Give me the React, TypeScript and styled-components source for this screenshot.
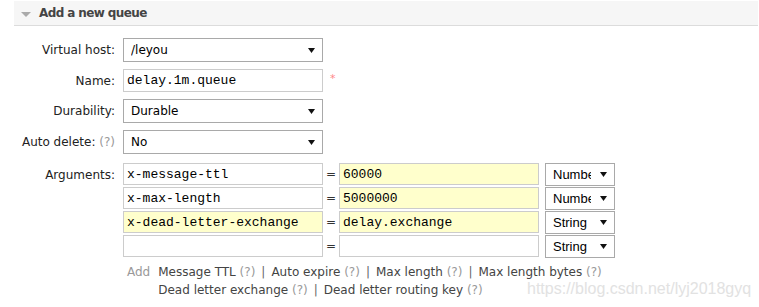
import styled, { createGlobalStyle } from "styled-components";

const GlobalStyle = createGlobalStyle`
  body {
    margin: 0;
    background: #fff;
    color: #333;
    font-family: "DejaVu Sans", Verdana, sans-serif;
    font-size: 12px;
  }
`;

type Arg = { key: string; value: string; type: string; hlKey?: boolean; hlValue?: boolean };

const args: Arg[] = [
    { key: "x-message-ttl", value: "60000", type: "Number", hlValue: true },
    { key: "x-max-length", value: "5000000", type: "Number", hlValue: true },
    { key: "x-dead-letter-exchange", value: "delay.exchange", type: "String", hlKey: true, hlValue: true },
    { key: "", value: "", type: "String" },
];

function Select({ value, width, sans }: { value: string; width: number; sans?: boolean }) {
    return (
        <SelectBox $width={width} $sans={sans}>
            <SelectValue $clip={sans}>{value}</SelectValue>
            <Arrow width="7" height="5" viewBox="0 0 7 5">
                <path d="M0 0H7L3.5 5Z" fill="#111" />
            </Arrow>
        </SelectBox>
    );
}

function Hint({ name }: { name: string }) {
    return (
        <HintLink>
            {name} <Help>(?)</Help>
        </HintLink>
    );
}

export default function App() {
    return (
        <Page>
            <GlobalStyle />
            <Panel>
                <PanelHeader>
                    <Toggle width="10" height="5" viewBox="0 0 10 5">
                        <path d="M0 0H10L5 5Z" fill="#aaa" />
                    </Toggle>
                    <Title>Add a new queue</Title>
                </PanelHeader>

                <Form>
                    <Label>Virtual host:</Label>
                    <Select value="/leyou" width={200} />

                    <Label>Name:</Label>
                    <Field>
                        <TextInput readOnly value="delay.1m.queue" $width={200} $height={23} />
                        <Required>*</Required>
                    </Field>

                    <Label>Durability:</Label>
                    <Select value="Durable" width={200} />

                    <Label>
                        Auto delete: <Help>(?)</Help>
                    </Label>
                    <Select value="No" width={200} />

                    <Label $top>Arguments:</Label>
                    <ArgsBlock>
                        <ArgTable>
                            {args.map((a, i) => (
                                <ArgRow key={i}>
                                    <TextInput readOnly value={a.key} $width={200} $height={22} $hl={a.hlKey} />
                                    <Equals>=</Equals>
                                    <TextInput readOnly value={a.value} $width={200} $height={22} $hl={a.hlValue} />
                                    <TypeCell>
                                        <Select value={a.type} width={70} sans />
                                    </TypeCell>
                                </ArgRow>
                            ))}
                        </ArgTable>

                        <AddLine>
                            <AddLabel>Add</AddLabel>
                            <Hints>
                                <HintRow>
                                    <Hint name="Message TTL" />
                                    <Sep>|</Sep>
                                    <Hint name="Auto expire" />
                                    <Sep>|</Sep>
                                    <Hint name="Max length" />
                                    <Sep>|</Sep>
                                    <Hint name="Max length bytes" />
                                </HintRow>
                                <HintRow>
                                    <Hint name="Dead letter exchange" />
                                    <Sep>|</Sep>
                                    <Hint name="Dead letter routing key" />
                                </HintRow>
                            </Hints>
                        </AddLine>
                    </ArgsBlock>
                </Form>
            </Panel>

            <Watermark>https://blog.csdn.net/lyj2018gyq</Watermark>
        </Page>
    );
}

const Page = styled.div`
    position: relative;
    width: 759px;
    height: 307px;
    overflow: hidden;
`;

const Panel = styled.div`
    margin: 1px 1px 0 14px;
`;

const PanelHeader = styled.div`
    height: 24px;
    display: flex;
    align-items: center;

    background-color: #f6f6f6;
    border-bottom: 1px solid #dcdcdc;
`;

const Toggle = styled.svg`
    margin: 2px 8px 0 7px;
`;

const Title = styled.div`
    color: #444;
    font-size: 12px;
    font-weight: 700;
    letter-spacing: -0.6px;
`;

const Form = styled.div`
    display: grid;
    grid-template-columns: 101px auto;
    column-gap: 8px;
    row-gap: 7px;
    align-items: center;

    margin-top: 12px;
`;

const Label = styled.div<{ $top?: boolean }>`
    text-align: right;
    white-space: nowrap;
    color: #222;
    align-self: ${(p) => (p.$top ? "start" : "center")};
    line-height: ${(p) => (p.$top ? "28px" : "normal")};
`;

const Help = styled.span`
    color: #999;
`;

const Field = styled.div`
    display: flex;
    align-items: flex-start;
`;

const Required = styled.span`
    color: #f88;
    margin: 4px 0 0 7px;
    font-size: 11px;
    line-height: 12px;
`;

const SelectBox = styled.div<{ $width: number; $sans?: boolean }>`
    box-sizing: border-box;
    width: ${(p) => p.$width}px;
    height: ${(p) => (p.$sans ? 23 : 24)}px;

    display: flex;
    align-items: center;
    padding: 0 7px;

    border: 1px solid #a9a9a9;
    background: #fff;
    color: #000;
    font-family: ${(p) => (p.$sans ? '"Liberation Sans", Arial, sans-serif' : '"DejaVu Sans", Verdana, sans-serif')};
    font-size: ${(p) => (p.$sans ? 13 : 12)}px;
`;

const SelectValue = styled.span<{ $clip?: boolean }>`
    flex: 1;
    overflow: hidden;
    white-space: nowrap;
    margin-right: ${(p) => (p.$clip ? 9 : 4)}px;
`;

const Arrow = styled.svg`
    flex: none;
`;

const TextInput = styled.input<{ $width: number; $height: number; $hl?: boolean }>`
    box-sizing: border-box;
    width: ${(p) => p.$width}px;
    height: ${(p) => p.$height}px;
    margin: 0;
    padding: 0 3px;

    border: 1px solid #ccc;
    background: ${(p) => (p.$hl ? "#ffffcc" : "#fff")};
    color: #000;
    font-family: "Liberation Mono", "Courier New", monospace;
    font-size: 13px;
    outline: none;
`;

const ArgsBlock = styled.div`
    display: flex;
    flex-direction: column;
`;

const ArgTable = styled.div`
    display: flex;
    flex-direction: column;
    margin-top: 1px;
`;

const ArgRow = styled.div`
    height: 24px;
    display: grid;
    grid-template-columns: 200px 16px 200px 76px;
    align-items: center;
`;

const Equals = styled.span`
    text-align: center;
    color: #333;
`;

const TypeCell = styled.div`
    padding-left: 6px;
`;

const AddLine = styled.div`
    display: flex;
    align-items: flex-start;
    margin-top: 5px;
    padding-left: 4px;
    line-height: 18px;
`;

const AddLabel = styled.span`
    color: #999;
    margin-right: 8px;
`;

const Hints = styled.div`
    display: flex;
    flex-direction: column;
`;

const HintRow = styled.div`
    white-space: nowrap;
`;

const HintLink = styled.span`
    color: #444;
`;

const Sep = styled.span`
    color: #666;
    margin: 0 6px;
`;

const Watermark = styled.div`
    position: absolute;
    left: 527px;
    top: 280px;

    color: #e2e2e2;
    font-family: "Liberation Sans", Arial, sans-serif;
    font-size: 16px;
    pointer-events: none;
`;
